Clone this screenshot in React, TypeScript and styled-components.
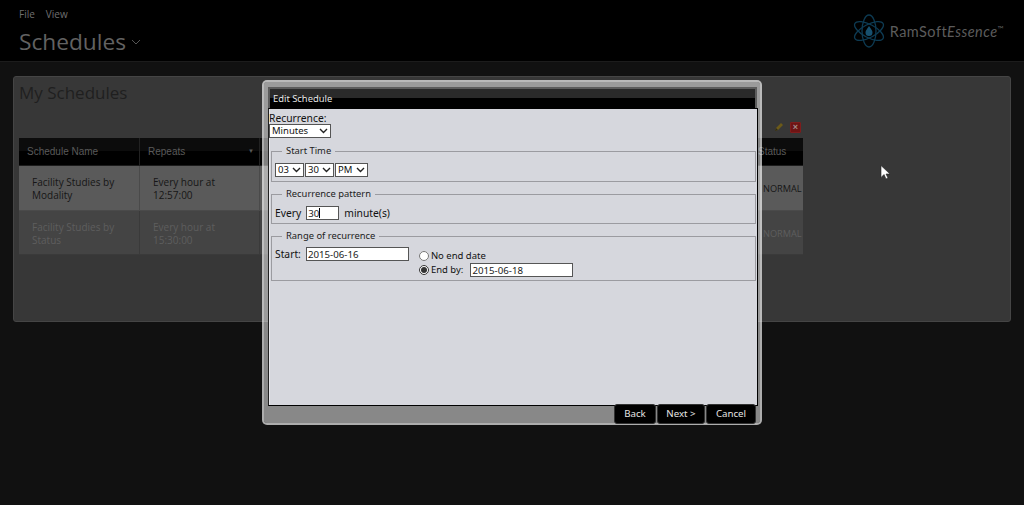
import React from "react";
import styled, { createGlobalStyle } from "styled-components";

const Global = createGlobalStyle`
  html, body { margin: 0; padding: 0; background: #111111; overflow: hidden; }
  #root { width: 1024px; height: 505px; }
`;

const Page = styled.div`
  position: relative;
  width: 1024px;
  height: 505px;
  overflow: hidden;
  background: #111111;
  font-family: "Open Sans", sans-serif;
`;

const Header = styled.header`
  height: 61px;
  background: #000;
  border-bottom: 1px solid #1c1c1c;
  display: flex;
  justify-content: space-between;
  padding: 0 20px 0 19px;
`;

const HeaderLeft = styled.div`
  display: flex;
  flex-direction: column;
`;

const Menu = styled.nav`
  display: flex;
  gap: 11px;
  padding-top: 7px;
  font-size: 10px;
  line-height: 14px;
  color: #6f6f6f;
`;

const PageTitle = styled.h1`
  margin: 4px 0 0;
  display: flex;
  align-items: center;
  gap: 5px;
  font-size: 22.7px;
  line-height: 33px;
  font-weight: 400;
  color: #626262;
`;

const Logo = styled.div`
  display: flex;
  align-items: center;
  height: 34px;
  margin-top: 14px;
  gap: 4px;
`;

const LogoText = styled.span`
  font-family: "Lato", sans-serif;
  font-size: 14.5px;
  letter-spacing: 0.45px;
  color: #5c5c5c;
  em { font-style: italic; }
  sup { font-size: 8px; vertical-align: 5px; line-height: 0; }
`;

const Content = styled.main`
  padding: 14px 13px 0;
`;

const Panel = styled.section`
  box-sizing: border-box;
  height: 246px;
  background: #373737;
  border: 1px solid #454545;
  border-radius: 3px;
  padding: 2px 5px;
`;

const PanelTitle = styled.h2`
  margin: 0;
  font-size: 17px;
  line-height: 27px;
  font-weight: 400;
  color: #1f1f1f;
`;

const Toolbar = styled.div`
  height: 28px;
  margin-top: 4px;
  width: 784px;
  display: flex;
  justify-content: flex-end;
  align-items: center;
  gap: 6px;
  padding: 6px 2px 0 0;
  box-sizing: border-box;
`;

const DeleteIcon = styled.span`
  display: block;
  box-sizing: border-box;
  width: 11px;
  height: 11px;
  background: #6e1414;
  border: 1px solid #7e1c1c;
  border-radius: 1px;
  color: #a08c8c;
  font: bold 9px/9px "Liberation Sans", sans-serif;
  text-align: center;
`;

const Table = styled.div`
  width: 784px;
  display: grid;
  grid-template-columns: 121px 120px 1fr 46px;
`;

const HeadCell = styled.div`
  height: 28px;
  box-sizing: border-box;
  padding: 0 8px;
  font: 10px/27px "Liberation Sans", sans-serif;
  color: #5a5a5a;
  background: linear-gradient(#0c0c0c 50%, #000 50%);
  border-right: 1px solid #222;
  border-bottom: 1px solid #1c1c1c;
  display: flex;
  justify-content: space-between;
  white-space: nowrap;
  overflow: visible;
  &:nth-child(4) { border-right: 0; padding: 0 0 0 1px; }
`;

const SortArrow = styled.span`
  font-size: 6px;
  color: #5a5a5a;
  margin-right: -3px;
`;

const Cell = styled.div<{ $dim?: boolean }>`
  box-sizing: border-box;
  height: ${(p) => (p.$dim ? "44px" : "45px")};
  padding: 10px 8px 0 13px;
  font-size: 10px;
  line-height: 13px;
  background: ${(p) => (p.$dim ? "#444444" : "#5a5a5a")};
  color: ${(p) => (p.$dim ? "#5e5e5e" : "#161616")};
  border-right: 1px solid ${(p) => (p.$dim ? "#3a3a3a" : "#4a4a4a")};
  border-bottom: 1px solid ${(p) => (p.$dim ? "#3a3a3a" : "#4a4a4a")};
  &:nth-child(4n) {
    border-right: 0;
    padding: 16px 0 0 6px;
    overflow: hidden;
    white-space: nowrap;
    font-size: 9.2px;
  }
`;

const Cursor = styled.svg`
  position: absolute;
  left: 880px;
  top: 165px;
`;

const Modal = styled.div`
  position: absolute;
  left: 262px;
  top: 80px;
  box-sizing: border-box;
  width: 500px;
  height: 345px;
  background: rgba(255, 255, 255, 0.5);
  border: 2px solid rgba(255, 255, 255, 0.66);
  background-clip: padding-box;
  border-radius: 5px;
  padding: 5px 2px 0 4px;
  display: flex;
  flex-direction: column;
`;

const ModalTitle = styled.div`
  box-sizing: border-box;
  flex: none;
  height: 21px;
  margin-right: 1px;
  border: 2px solid #5c5c5c;
  border-bottom: 0;
  background: linear-gradient(#2a2a2a 45%, #000 45%);
  color: #e6e6e6;
  font: 9.4px/19px "Noto Sans", sans-serif;
  padding-left: 3px;
`;

const ModalBody = styled.div`
  box-sizing: border-box;
  flex: none;
  height: 298px;
  background: #d6d7dd;
  border: 1px solid #000;
  border-left: 1px solid #222;
  box-shadow: inset 1px 0 0 #e8e8ec;
  color: #111;
  font: 10.3px/12px "Noto Sans", sans-serif;
`;

const RecurrenceField = styled.label`
  display: flex;
  flex-direction: column;
  align-items: flex-start;
  height: 36px;
  padding-top: 3px;
  box-sizing: border-box;
`;

const Select = styled.select<{ $w: number }>`
  box-sizing: border-box;
  appearance: none;
  width: ${(p) => p.$w}px;
  height: 14px;
  margin: 0;
  padding: 0 0 0 2px;
  border: 1px solid #555;
  border-radius: 0;
  background: #fff url("data:image/svg+xml,%3Csvg xmlns='http://www.w3.org/2000/svg' width='9' height='6'%3E%3Cpath d='M1 1l3.500 3.500L8 1' fill='none' stroke='%23222' stroke-width='1.400'/%3E%3C/svg%3E") no-repeat right 2px center;
  color: #111;
  font: 9.5px/12px "Noto Sans", sans-serif;
`;

const Fieldset = styled.fieldset<{ $h: number; $gap: number }>`
  box-sizing: border-box;
  height: ${(p) => p.$h}px;
  margin: 0 1px ${(p) => p.$gap}px 2px;
  padding: 6px 3px 0 3px;
  border: 1px solid #9b9ba0;
  min-width: 0;
`;

const Legend = styled.legend`
  margin-left: 7px;
  padding: 0 4px;
  font-size: 9.4px;
  line-height: 12px;
  color: #222;
`;

const TimeRow = styled.div`
  display: flex;
  gap: 1px;
`;

const PatternRow = styled.div`
  display: flex;
  align-items: center;
  gap: 5px;
  font-size: 10.3px;
`;

const TextInput = styled.input<{ $w: number }>`
  box-sizing: border-box;
  width: ${(p) => p.$w}px;
  height: 14px;
  margin: 0;
  padding: 0 2px 0 1px;
  border: 1px solid #555;
  border-radius: 0;
  background: #fff;
  color: #222;
  font: 9.7px/12px "Noto Sans", sans-serif;
  outline: none;
`;

const InputWrap = styled.span`
  position: relative;
  display: inline-flex;
`;

const Caret = styled.span`
  position: absolute;
  left: 13px;
  top: 2px;
  width: 1px;
  height: 10px;
  background: #000;
`;

const RangeGrid = styled.div`
  display: flex;
  gap: 10px;
  align-items: flex-start;
  margin-top: -1px;
`;

const StartGroup = styled.div`
  display: flex;
  align-items: center;
  gap: 5px;
`;

const EndGroup = styled.div`
  display: flex;
  flex-direction: column;
  padding-top: 2px;
`;

const RadioRow = styled.label`
  display: flex;
  align-items: center;
  gap: 2px;
  height: 14px;
  font-size: 9.5px;
`;

const Radio = styled.input`
  width: 10px;
  height: 10px;
  margin: 0;
  accent-color: #333;
`;

const EndInput = styled(TextInput)`
  margin-left: 5px;
`;

const Footer = styled.div`
  display: flex;
  justify-content: flex-end;
  gap: 1px;
  margin-top: -2px;
  padding-right: 2px;
`;

const Button = styled.button<{ $w: number }>`
  box-sizing: border-box;
  width: ${(p) => p.$w}px;
  height: 20px;
  padding: 0;
  background: #000;
  color: #e4e4e4;
  border: 1px solid #333;
  border-radius: 3px;
  font: 9.7px/1 "Noto Sans", sans-serif;
`;

const AtomLogo = () => (
  <svg width="34" height="34" viewBox="0 0 34 34" fill="none" stroke="#0d3a52" strokeWidth="1.3">
    <ellipse cx="17" cy="17" rx="16" ry="6.5" transform="rotate(28 17 17)" />
    <ellipse cx="17" cy="17" rx="16" ry="6.5" transform="rotate(-28 17 17)" />
    <ellipse cx="17" cy="17" rx="16" ry="7" transform="rotate(90 17 17)" />
    <path d="M17 12c2 3 3.500 4.500 3.500 6.500a3.500 3.500 0 0 1-7 0c0-2 1.500-3.500 3.500-6.500z" fill="#17506e" stroke="none" />
  </svg>
);

const PencilIcon = () => (
  <svg width="10" height="10" viewBox="0 0 10 10">
    <path d="M1 9l1-3 5-5 2 2-5 5z" fill="#6c5a18" />
    <path d="M1 9l1-3 2 2z" fill="#2e2a18" />
  </svg>
);

const Chevron = () => (
  <svg width="10" height="6" viewBox="0 0 10 6" fill="none" stroke="#555" strokeWidth="1">
    <path d="M1 1l4 4 4-4" />
  </svg>
);

const rows = [
  { name: "Facility Studies by Modality", repeats: "Every hour at 12:57:00", dim: false },
  { name: "Facility Studies by Status", repeats: "Every hour at 15:30:00", dim: true },
];

export default function App() {
  return (
    <Page>
      <Global />
      <Header>
        <HeaderLeft>
          <Menu>
            <span>File</span>
            <span>View</span>
          </Menu>
          <PageTitle>
            Schedules <Chevron />
          </PageTitle>
        </HeaderLeft>
        <Logo>
          <AtomLogo />
          <LogoText>
            RamSoft<em>Essence</em>
            <sup>™</sup>
          </LogoText>
        </Logo>
      </Header>
      <Content>
        <Panel>
          <PanelTitle>My Schedules</PanelTitle>
          <Toolbar>
            <PencilIcon />
            <DeleteIcon>×</DeleteIcon>
          </Toolbar>
          <Table>
            <HeadCell>Schedule Name</HeadCell>
            <HeadCell>
              Repeats <SortArrow>▼</SortArrow>
            </HeadCell>
            <HeadCell />
            <HeadCell>Status</HeadCell>
            {rows.map((r) => (
              <React.Fragment key={r.name}>
                <Cell $dim={r.dim}>{r.name}</Cell>
                <Cell $dim={r.dim}>{r.repeats}</Cell>
                <Cell $dim={r.dim} />
                <Cell $dim={r.dim}>NORMAL</Cell>
              </React.Fragment>
            ))}
          </Table>
        </Panel>
      </Content>
      <Cursor width="10" height="15" viewBox="0 0 10 15">
        <path d="M1 0.500v12l3-3 2 4.500 2-1-2-4h4z" fill="#fff" stroke="#222" strokeWidth="0.6" />
      </Cursor>
      <Modal>
        <ModalTitle>Edit Schedule</ModalTitle>
        <ModalBody>
          <RecurrenceField>
            Recurrence:
            <Select $w={62} defaultValue="Minutes">
              <option>Minutes</option>
            </Select>
          </RecurrenceField>
          <Fieldset $h={37} $gap={6}>
            <Legend>Start Time</Legend>
            <TimeRow>
              <Select $w={29}><option>03</option></Select>
              <Select $w={29}><option>30</option></Select>
              <Select $w={33}><option>PM</option></Select>
            </TimeRow>
          </Fieldset>
          <Fieldset $h={36} $gap={6}>
            <Legend>Recurrence pattern</Legend>
            <PatternRow>
              Every
              <InputWrap>
                <TextInput $w={33} defaultValue="30" />
                <Caret />
              </InputWrap>
              minute(s)
            </PatternRow>
          </Fieldset>
          <Fieldset $h={51} $gap={0}>
            <Legend>Range of recurrence</Legend>
            <RangeGrid>
              <StartGroup>
                Start:
                <TextInput $w={103} defaultValue="2015-06-16" />
              </StartGroup>
              <EndGroup>
                <RadioRow>
                  <Radio type="radio" name="end" />
                  No end date
                </RadioRow>
                <RadioRow>
                  <Radio type="radio" name="end" defaultChecked />
                  End by:
                  <EndInput $w={103} defaultValue="2015-06-18" />
                </RadioRow>
              </EndGroup>
            </RangeGrid>
          </Fieldset>
        </ModalBody>
        <Footer>
          <Button $w={42}>Back</Button>
          <Button $w={48}>Next &gt;</Button>
          <Button $w={50}>Cancel</Button>
        </Footer>
      </Modal>
    </Page>
  );
}
